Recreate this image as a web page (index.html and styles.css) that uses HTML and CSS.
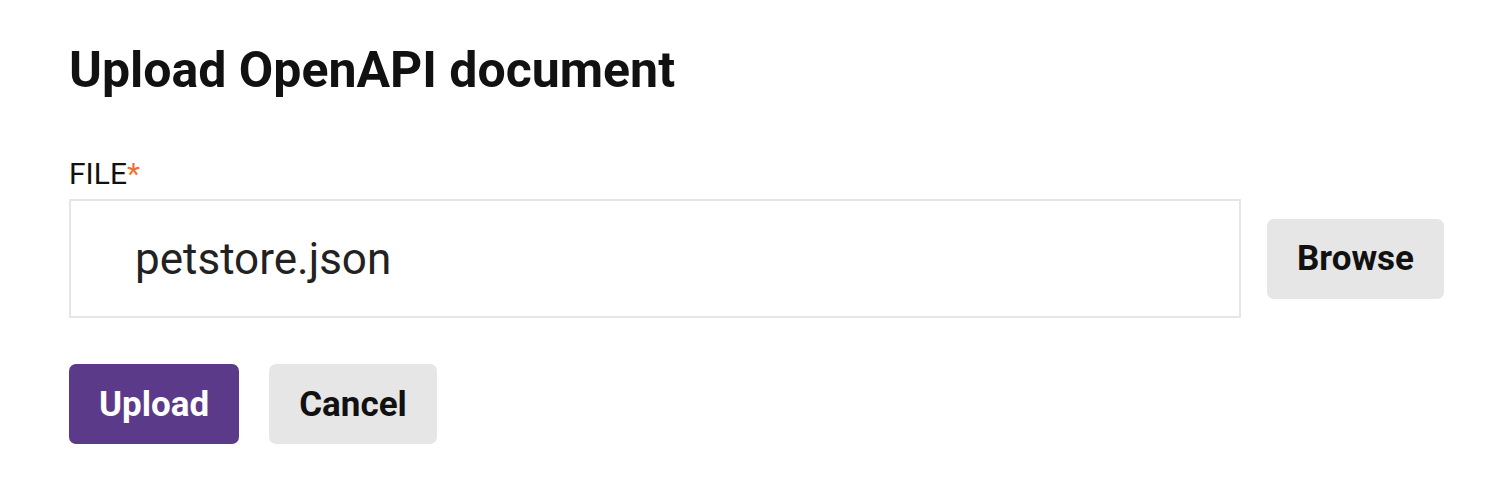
FILE: index.html
```html
<!DOCTYPE html>
<html lang="en">
<head>
<meta charset="utf-8">
<title>Upload OpenAPI document</title>
<link rel="stylesheet" href="styles.css">
</head>
<body>
<main class="dialog">
  <h1 class="title">Upload OpenAPI document</h1>
  <form class="form">
    <label class="label" for="file">FILE<span class="req">*</span></label>
    <div class="file-row">
      <div class="file-input" id="file">petstore.json</div>
      <button type="button" class="btn btn-secondary">Browse</button>
    </div>
    <div class="actions">
      <button type="button" class="btn btn-primary">Upload</button>
      <button type="button" class="btn btn-secondary">Cancel</button>
    </div>
  </form>
</main>
</body>
</html>
```
FILE: styles.css
```css
html, body {
  margin: 0;
  padding: 0;
  background: #ffffff;
}
body {
  font-family: Roboto, "Liberation Sans", sans-serif;
  color: #111111;
}
.dialog {
  padding: 45px 0 0 69px;
  width: 1375px;
}
.title {
  margin: 0;
  font-size: 50px;
  line-height: 50px;
  font-weight: 700;
  color: #111111;
}
.form {
  display: flex;
  flex-direction: column;
  margin-top: 64px;
}
.label {
  font-size: 30px;
  line-height: 30px;
  color: #111111;
}
.req {
  color: #f07030;
}
.file-row {
  display: flex;
  align-items: center;
  gap: 26px;
  margin-top: 10px;
}
.file-input {
  box-sizing: border-box;
  width: 1172px;
  height: 119px;
  border: 2px solid #e6e6e6;
  padding-left: 64px;
  display: flex;
  align-items: center;
  font-size: 44px;
  color: #222222;
}
.btn {
  box-sizing: border-box;
  height: 80px;
  padding: 0 30px;
  border: none;
  border-radius: 7px;
  font-family: Roboto, "Liberation Sans", sans-serif;
  font-size: 35px;
  font-weight: 700;
  cursor: pointer;
}
.btn-secondary {
  background: #e6e6e6;
  color: #111111;
}
.btn-primary {
  background: #5b3a89;
  color: #ffffff;
}
.actions {
  display: flex;
  gap: 30px;
  margin-top: 46px;
}
```
